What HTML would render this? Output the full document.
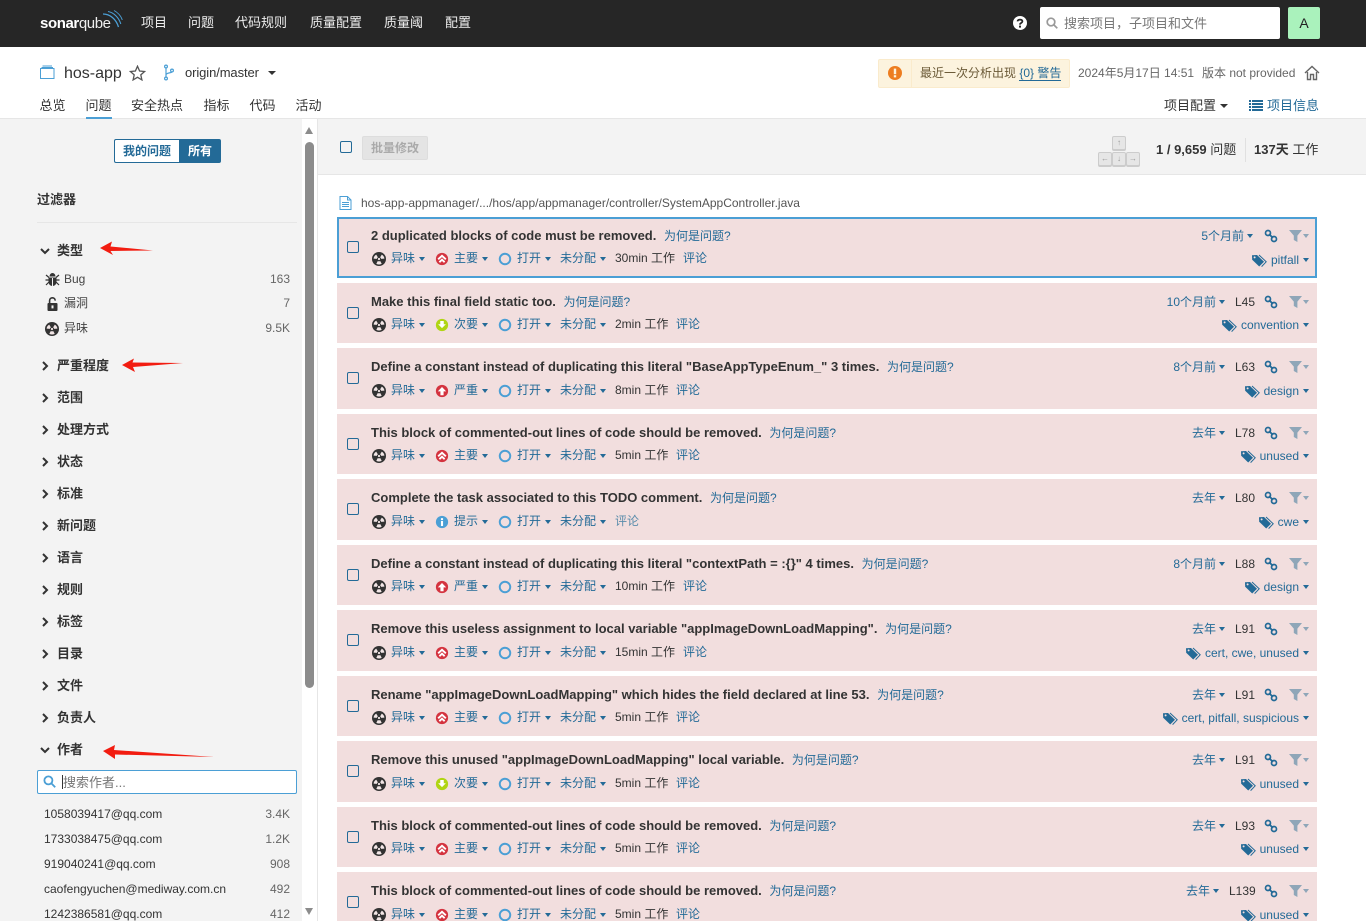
<!DOCTYPE html>
<html lang="zh">
<head>
<meta charset="utf-8">
<title>hos-app</title>
<style>
html,body{margin:0;padding:0;width:1366px;height:921px;overflow:hidden;background:#fff}
body{position:relative;font:12px/16px "Liberation Sans","Noto Sans CJK SC",sans-serif;color:#333}
.a{position:absolute;white-space:nowrap}
.lk{color:#236a97}
.nav{color:#eee;font-size:13px;top:15px;line-height:16px}
.tab{font-size:13px;top:98px;color:#333}
.facet{left:57px;font-size:13px;font-weight:bold;color:#333;line-height:16px;margin-top:1px}
.chev{left:40px;width:10px;height:10px}
.row{position:absolute;left:337px;width:980px;height:60px;background:#f2dede}
.sel{box-sizing:border-box;left:337px;width:980px;height:61px;border:2px solid #4b9fd5;background:#f2dede}
.t{position:absolute;left:34px;top:11px;font-size:13px;font-weight:bold;color:#333;white-space:nowrap;line-height:16px}
.t span{font-weight:normal;font-size:12px;color:#236a97;margin-left:4px}
.m{position:absolute;top:33px;line-height:16px;white-space:nowrap;color:#236a97}
.d{color:#333}
.cb{position:absolute;left:10px;top:24px;width:10px;height:10px;border:1px solid #236a97;border-radius:2px;background:transparent}
.ic{position:absolute;width:14px;height:14px;top:35px}
.tri{position:absolute;width:0;height:0;border-left:3.5px solid transparent;border-right:3.5px solid transparent;border-top:4px solid #236a97;top:40px}
.dt{position:absolute;right:101px;top:11px;color:#236a97;white-space:nowrap;line-height:16px}
.tg{position:absolute;right:18px;top:34px;color:#236a97;white-space:nowrap;line-height:16px}
.tg svg{width:15px;height:13px;vertical-align:-3px;margin-right:4px}
.key{position:absolute;width:12px;height:12px;border:1px solid #ccc;border-radius:2px;background:#e6e6e6;color:#999;font-size:8px;line-height:12px;text-align:center;box-shadow:0 1px 0 #ccc}
.n{right:1076px;color:#666;text-align:right}
</style>
</head>
<body>
<svg width="0" height="0" style="position:absolute">
<defs>
<symbol id="smell" viewBox="0 0 14 14"><circle cx="7" cy="7" r="7" fill="#333"/><path d="M1.6 6.6A5.4 5.4 0 0 1 4.2 2.6L5.900 5.400A2.3 2.3 0 0 0 4.800 6.900ZM12.400 6.600A5.4 5.4 0 0 0 9.800 2.600L8.100 5.400A2.3 2.3 0 0 1 9.200 6.900ZM4.300 11.700A5.4 5.4 0 0 0 9.700 11.700L8.200 9A2.3 2.3 0 0 1 5.800 9Z" fill="#f2e6e6"/><circle cx="7" cy="7" r="1.1" fill="#f2e6e6"/></symbol>
<symbol id="major" viewBox="-1 -1 16 16"><circle cx="7" cy="7" r="7" fill="#d4333f"/><path d="M2.600 7.400 7 3.400l4.400 4M4 10.600 7 7.800l3 2.800" fill="none" stroke="#fff" stroke-width="2.200"/></symbol>
<symbol id="crit" viewBox="-1 -1 16 16"><circle cx="7" cy="7" r="7" fill="#d4333f"/><path d="M7 2.400 11.800 7.400H8.800v4.400H5.200V7.400H2.200Z" fill="#fff"/></symbol>
<symbol id="minor" viewBox="-1 -1 16 16"><circle cx="7" cy="7" r="7" fill="#b0d513"/><path d="M5 2.400h4V6.200h2.400L7 10.600 2.600 6.200H5Z" fill="#fff"/></symbol>
<symbol id="info" viewBox="-1 -1 16 16"><circle cx="7" cy="7" r="7" fill="#4b9fd5"/><rect x="5.800" y="2.600" width="2.400" height="2.200" fill="#fff"/><rect x="5.800" y="5.800" width="2.400" height="5.800" fill="#fff"/></symbol>
<symbol id="open" viewBox="-1 -1 16 16"><circle cx="7" cy="7" r="6" fill="none" stroke="#4b9fd5" stroke-width="2.200"/></symbol>
<symbol id="link" viewBox="0 0 14 14"><g fill="none" stroke="#236a97" stroke-width="1.700"><circle cx="4" cy="4" r="2.500"/><circle cx="10" cy="10" r="2.500"/><path d="M5 5l4 4"/></g></symbol>
<symbol id="filter" viewBox="0 0 14 14"><path d="M0 1h13L8.400 6.600V13L4.800 11V6.600Z" fill="#8fa6b8"/></symbol>
<symbol id="tag" viewBox="0 0 15 13"><path d="M0 1.200 5 1l7 6.800-4.800 4.700L.2 5.800Z" fill="#236a97"/><path d="M7 1l7.200 6.800L9.600 12.600" fill="none" stroke="#236a97" stroke-width="1"/><circle cx="2.600" cy="3.400" r="1" fill="#f2dede"/></symbol>
</defs>
</svg>

<!-- top bar -->
<div class="a" style="left:0;top:0;width:1366px;height:47px;background:#262626"></div>
<div class="a" style="left:40px;top:15px;font-size:15px;line-height:18px;color:#fff;letter-spacing:-.4px"><b>sonar</b><span style="font-weight:normal;color:#eee">qube</span></div>
<svg class="a" style="left:102px;top:9px" width="22" height="20" viewBox="0 0 22 20" fill="none" stroke="#4b9fd5"><path d="M1 5C8 5 14 10 16.500 18" stroke-width="1.300"/><path d="M6 2.500C12 3.500 17 9 18.800 15" stroke-width="1.100"/><path d="M12 1.500C15 3 19 6.500 20.300 11" stroke-width=".9"/></svg>
<div class="a nav" style="left:141px">项目</div>
<div class="a nav" style="left:188px">问题</div>
<div class="a nav" style="left:235px">代码规则</div>
<div class="a nav" style="left:310px">质量配置</div>
<div class="a nav" style="left:384px">质量阈</div>
<div class="a nav" style="left:445px">配置</div>
<svg class="a" style="left:1013px;top:16px" width="14" height="14" viewBox="0 0 14 14"><circle cx="7" cy="7" r="7" fill="#fff"/><path d="M4.600 5.400C4.600 3 9.400 3 9.400 5.400 9.400 7 7 6.800 7 8.600" fill="none" stroke="#262626" stroke-width="1.800"/><rect x="6" y="9.600" width="2" height="2" fill="#262626"/></svg>
<div class="a" style="left:1040px;top:7px;width:240px;height:32px;background:#fff;border-radius:2px"></div>
<svg class="a" style="left:1046px;top:17px" width="12" height="12" viewBox="0 0 12 12" fill="none" stroke="#999" stroke-width="1.700"><circle cx="5" cy="5" r="3.800"/><path d="M8 8l3.300 3.300"/></svg>
<div class="a" style="left:1064px;top:16px;font-size:13px;color:#777">搜索项目，子项目和文件</div>
<div class="a" style="left:1288px;top:7px;width:32px;height:32px;background:#aaf2bc;border-radius:2px;text-align:center;line-height:32px;font-size:14px;color:#222">A</div>

<!-- project header -->
<svg class="a" style="left:40px;top:65px" width="15" height="15" viewBox="0 0 15 15" fill="none" stroke="#4b9fd5" stroke-width="1"><rect x=".5" y="3.500" width="13.500" height="10"/><path d="M1.500 2.500h11.500M2.500 1h9.500"/></svg>
<div class="a" style="left:64px;top:64px;font-size:16px;line-height:20px;color:#333">hos-app</div>
<svg class="a" style="left:129px;top:65px" width="17" height="16" viewBox="0 0 17 16"><path d="M8.500 1.200 10.600 6l5 .5-3.800 3.400 1.100 5-4.400-2.600-4.400 2.600 1.100-5L1.400 6.500l5-.5Z" fill="none" stroke="#555" stroke-width="1.300"/></svg>
<svg class="a" style="left:163px;top:64px" width="12" height="17" viewBox="0 0 12 17" fill="none" stroke="#4b9fd5" stroke-width="1.200"><circle cx="3" cy="2.500" r="1.400"/><circle cx="3" cy="14.500" r="1.400"/><circle cx="9" cy="6.500" r="1.400"/><path d="M3 4v9M3 11C3 8.500 8.500 9 9 8"/></svg>
<div class="a" style="left:185px;top:65px;font-size:13px;letter-spacing:-.1px;color:#333">origin/master</div>
<div class="a" style="left:268px;top:71px;border-left:4px solid transparent;border-right:4px solid transparent;border-top:4px solid #333;width:0;height:0"></div>

<div class="a" style="left:878px;top:59px;width:192px;height:29px;box-sizing:border-box;background:#fcf3de;border:1px solid #faebcc;border-radius:2px"></div>
<div class="a" style="left:911px;top:60px;width:1px;height:27px;background:#faebcc"></div>
<svg class="a" style="left:888px;top:66px" width="14" height="14" viewBox="0 0 14 14"><circle cx="7" cy="7" r="7" fill="#ed7d20"/><rect x="5.800" y="2.600" width="2.400" height="5.600" fill="#fcf3de"/><rect x="5.800" y="9.200" width="2.400" height="2.200" fill="#fcf3de"/></svg>
<div class="a" style="left:920px;top:65px;color:#6b5a37">最近一次分析出现 <span style="color:#236a97;border-bottom:1px solid #236a97">{0} 警告</span></div>
<div class="a" style="left:1078px;top:65px;color:#666">2024年5月17日 14:51</div>
<div class="a" style="left:1202px;top:65px;color:#666">版本 not provided</div>
<svg class="a" style="left:1304px;top:65px" width="16" height="16" viewBox="0 0 16 16" fill="none" stroke="#666" stroke-width="1.400"><path d="M1 8l7-6.500L15 8M3.500 7v7.500h3v-5h3v5h3V7"/></svg>

<div class="a tab" style="left:39.500px">总览</div>
<div class="a tab" style="left:85.500px">问题</div>
<div class="a tab" style="left:131px">安全热点</div>
<div class="a tab" style="left:203.500px">指标</div>
<div class="a tab" style="left:249.500px">代码</div>
<div class="a tab" style="left:295.500px">活动</div>
<div class="a tab" style="left:1164px">项目配置</div>
<div class="a" style="left:1220px;top:104px;border-left:4px solid transparent;border-right:4px solid transparent;border-top:4px solid #333;width:0;height:0"></div>
<svg class="a" style="left:1249px;top:100px" width="14" height="11" viewBox="0 0 14 11" fill="#236a97"><path d="M0 0h2v2H0zM3 0h11v2H3zM0 3h2v2H0zM3 3h11v2H3zM0 6h2v2H0zM3 6h11v2H3zM0 9h2v2H0zM3 9h11v2H3z"/></svg>
<div class="a tab lk" style="left:1267px;color:#236a97">项目信息</div>
<div class="a" style="left:0;top:118px;width:1366px;height:1px;background:#e6e6e6"></div>
<div class="a" style="left:86px;top:117px;width:26px;height:3px;background:#4b9fd5"></div>

<!-- sidebar -->
<div class="a" style="left:0;top:119px;width:302px;height:802px;background:#f3f3f3"></div>
<div class="a" style="left:317px;top:119px;width:1px;height:802px;background:#e6e6e6"></div>
<div class="a" style="left:305px;top:142px;width:9px;height:546px;background:#8c8c8c;border-radius:5px"></div>
<div class="a" style="left:305px;top:127px;border-left:4.500px solid transparent;border-right:4.500px solid transparent;border-bottom:7px solid #8c8c8c;width:0;height:0"></div>
<div class="a" style="left:305px;top:908px;border-left:4.500px solid transparent;border-right:4.500px solid transparent;border-top:7px solid #8c8c8c;width:0;height:0"></div>

<div class="a" style="left:114px;top:139px;width:65px;height:24px;box-sizing:border-box;border:1px solid #236a97;border-right:0;border-radius:2px 0 0 2px;background:#fff;color:#236a97;font-weight:bold;text-align:center;line-height:22px">我的问题</div>
<div class="a" style="left:179px;top:139px;width:42px;height:24px;background:#236a97;border-radius:0 2px 2px 0;color:#fff;font-weight:bold;text-align:center;line-height:24px">所有</div>
<div class="a" style="left:37px;top:192px;font-size:13px;font-weight:bold;color:#333">过滤器</div>
<div class="a" style="left:37px;top:222px;width:260px;height:1px;background:#e6e6e6"></div>

<svg class="a chev" style="top:246px" viewBox="0 0 10 10"><path d="M1 3l4 4 4-4" fill="none" stroke="#333" stroke-width="2"/></svg>
<div class="a facet" style="top:242px">类型</div>
<svg class="a" style="left:45px;top:272px" width="15" height="14" viewBox="0 0 15 14"><path d="M4.500 4.500a3 3.500 0 0 1 6 0ZM3.500 5.500h8V10a4 4 0 0 1-8 0Z" fill="#333"/><path d="M1 3l3 2.500M14 3l-3 2.500M.5 8h3M14.500 8h-3M1 13l3-3M14 13l-3-3" stroke="#333" stroke-width="1.200"/><path d="M7.500 6v8" stroke="#f3f3f3"/></svg>
<div class="a" style="left:64px;top:271px;color:#444">Bug</div>
<div class="a n" style="top:271px">163</div>
<svg class="a" style="left:47px;top:297px" width="11" height="14" viewBox="0 0 11 14"><rect x=".5" y="6" width="10" height="8" rx="1" fill="#333"/><path d="M2.600 6V3.600a2.800 2.800 0 0 1 5.600 0" fill="none" stroke="#333" stroke-width="1.600"/><rect x="4.500" y="8.400" width="2" height="3" fill="#f3f3f3"/></svg>
<div class="a" style="left:64px;top:295px;color:#444">漏洞</div>
<div class="a n" style="top:295px">7</div>
<svg class="a" style="left:45px;top:322px" width="14" height="14"><use href="#smell"/></svg>
<div class="a" style="left:64px;top:320px;color:#444">异味</div>
<div class="a n" style="top:320px">9.5K</div>

<svg class="a chev" style="top:361px" viewBox="0 0 10 10"><path d="M3 1l4 4-4 4" fill="none" stroke="#333" stroke-width="2"/></svg>
<div class="a facet" style="top:357px">严重程度</div>
<svg class="a chev" style="top:393px" viewBox="0 0 10 10"><path d="M3 1l4 4-4 4" fill="none" stroke="#333" stroke-width="2"/></svg>
<div class="a facet" style="top:389px">范围</div>
<svg class="a chev" style="top:425px" viewBox="0 0 10 10"><path d="M3 1l4 4-4 4" fill="none" stroke="#333" stroke-width="2"/></svg>
<div class="a facet" style="top:421px">处理方式</div>
<svg class="a chev" style="top:457px" viewBox="0 0 10 10"><path d="M3 1l4 4-4 4" fill="none" stroke="#333" stroke-width="2"/></svg>
<div class="a facet" style="top:453px">状态</div>
<svg class="a chev" style="top:489px" viewBox="0 0 10 10"><path d="M3 1l4 4-4 4" fill="none" stroke="#333" stroke-width="2"/></svg>
<div class="a facet" style="top:485px">标准</div>
<svg class="a chev" style="top:521px" viewBox="0 0 10 10"><path d="M3 1l4 4-4 4" fill="none" stroke="#333" stroke-width="2"/></svg>
<div class="a facet" style="top:517px">新问题</div>
<svg class="a chev" style="top:553px" viewBox="0 0 10 10"><path d="M3 1l4 4-4 4" fill="none" stroke="#333" stroke-width="2"/></svg>
<div class="a facet" style="top:549px">语言</div>
<svg class="a chev" style="top:585px" viewBox="0 0 10 10"><path d="M3 1l4 4-4 4" fill="none" stroke="#333" stroke-width="2"/></svg>
<div class="a facet" style="top:581px">规则</div>
<svg class="a chev" style="top:617px" viewBox="0 0 10 10"><path d="M3 1l4 4-4 4" fill="none" stroke="#333" stroke-width="2"/></svg>
<div class="a facet" style="top:613px">标签</div>
<svg class="a chev" style="top:649px" viewBox="0 0 10 10"><path d="M3 1l4 4-4 4" fill="none" stroke="#333" stroke-width="2"/></svg>
<div class="a facet" style="top:645px">目录</div>
<svg class="a chev" style="top:681px" viewBox="0 0 10 10"><path d="M3 1l4 4-4 4" fill="none" stroke="#333" stroke-width="2"/></svg>
<div class="a facet" style="top:677px">文件</div>
<svg class="a chev" style="top:713px" viewBox="0 0 10 10"><path d="M3 1l4 4-4 4" fill="none" stroke="#333" stroke-width="2"/></svg>
<div class="a facet" style="top:709px">负责人</div>
<svg class="a chev" style="top:745px" viewBox="0 0 10 10"><path d="M1 3l4 4 4-4" fill="none" stroke="#333" stroke-width="2"/></svg>
<div class="a facet" style="top:741px">作者</div>

<div class="a" style="left:37px;top:770px;width:260px;height:24px;box-sizing:border-box;background:#fff;border:1px solid #4b9fd5;border-radius:2px"></div>
<svg class="a" style="left:43px;top:775px" width="13" height="13" viewBox="0 0 13 13" fill="none" stroke="#4b9fd5" stroke-width="1.800"><circle cx="5.400" cy="5.400" r="4"/><path d="M8.400 8.400l3.800 3.800"/></svg>
<div class="a" style="left:62px;top:775px;width:1px;height:14px;background:#333"></div>
<div class="a" style="left:63px;top:775px;font-size:13px;color:#777">搜索作者...</div>
<div class="a" style="left:44px;top:806px;color:#333">1058039417@qq.com</div><div class="a n" style="top:806px">3.4K</div>
<div class="a" style="left:44px;top:831px;color:#333">1733038475@qq.com</div><div class="a n" style="top:831px">1.2K</div>
<div class="a" style="left:44px;top:856px;color:#333">919040241@qq.com</div><div class="a n" style="top:856px">908</div>
<div class="a" style="left:44px;top:881px;color:#333">caofengyuchen@mediway.com.cn</div><div class="a n" style="top:881px">492</div>
<div class="a" style="left:44px;top:906px;color:#333">1242386581@qq.com</div><div class="a n" style="top:906px">412</div>

<!-- red arrows -->
<svg class="a" style="left:0;top:230px" width="300" height="540" viewBox="0 230 300 540">
<path d="M100 248 112 241.500 110.500 246.500 153 250.500 110.500 251 113 255Z" fill="#f21c10"/>
<path d="M122 365 134 358.500 132.500 362.500 183 363 133 367 135 372Z" fill="#f21c10"/>
<path d="M103 751 115 745 114 750 214 757 115 754.500 115 759Z" fill="#f21c10"/>
</svg>

<!-- toolbar -->
<div class="a" style="left:318px;top:119px;width:1048px;height:55px;background:#f3f3f3;border-bottom:1px solid #e6e6e6"></div>
<div class="a" style="left:340px;top:141px;width:10px;height:10px;border:1px solid #236a97;border-radius:2px"></div>
<div class="a" style="left:362px;top:136px;width:66px;height:24px;box-sizing:border-box;background:#e4e4e4;border:1px solid #ddd;border-radius:2px;text-align:center;line-height:22px;color:#aaa;font-weight:bold">批量修改</div>
<div class="key" style="left:1112px;top:136px">↑</div>
<div class="key" style="left:1098px;top:152px">←</div>
<div class="key" style="left:1112px;top:152px">↓</div>
<div class="key" style="left:1126px;top:152px">→</div>
<div class="a" style="left:1156px;top:141px;font-size:13px;line-height:18px;color:#333"><b>1 / 9,659</b> 问题</div>
<div class="a" style="left:1245px;top:138px;width:1px;height:24px;background:#e0e0e0"></div>
<div class="a" style="left:1254px;top:141px;font-size:13px;line-height:18px;color:#333"><b>137天</b> 工作</div>

<svg class="a" style="left:339px;top:196px" width="13" height="14" viewBox="0 0 13 14" fill="none" stroke="#4b9fd5"><path d="M1 .5h7.500l3.500 3.500v9.500H1ZM8.500 .5V4H12M3 6.500h7M3 8.500h7M3 10.500h7"/></svg>
<div class="a" style="left:361px;top:195px;color:#555">hos-app-appmanager/.../hos/app/appmanager/controller/SystemAppController.java</div>

<!-- row 1 -->
<div class="a sel" style="top:217px"></div>
<div class="row" style="top:217px;background:transparent">
<div class="t">2 duplicated blocks of code must be removed. <span>为何是问题?</span></div>
<div class="cb"></div>
<svg class="ic" style="left:35px"><use href="#smell"/></svg><div class="m" style="left:54px">异味</div><div class="tri" style="left:82px"></div>
<svg class="ic" style="left:98px"><use href="#major"/></svg><div class="m" style="left:117px">主要</div><div class="tri" style="left:145px"></div>
<svg class="ic" style="left:161px"><use href="#open"/></svg><div class="m" style="left:180px">打开</div><div class="tri" style="left:208px"></div>
<div class="m" style="left:223px">未分配</div><div class="tri" style="left:263px"></div>
<div class="m d" style="left:278px">30min 工作</div><div class="m" style="left:346px">评论</div>
<div class="a lk" style="right:73px;top:11px">5个月前</div><div class="tri" style="left:910px;top:17px"></div>
<svg class="ic" style="left:927px;top:12px"><use href="#link"/></svg>
<svg class="ic" style="left:952px;top:12px"><use href="#filter"/></svg><div class="tri" style="left:966px;top:17px;border-top-color:#8fa6b8"></div>
<div class="tg" style="top:35px"><svg><use href="#tag"/></svg>pitfall</div><div class="tri" style="left:966px;top:41px"></div>
</div>

<!-- row 2 -->
<div class="row" style="top:283px">
<div class="t">Make this final field static too. <span>为何是问题?</span></div><div class="cb"></div>
<svg class="ic" style="left:35px"><use href="#smell"/></svg><div class="m" style="left:54px">异味</div><div class="tri" style="left:82px"></div>
<svg class="ic" style="left:98px"><use href="#minor"/></svg><div class="m" style="left:117px">次要</div><div class="tri" style="left:145px"></div>
<svg class="ic" style="left:161px"><use href="#open"/></svg><div class="m" style="left:180px">打开</div><div class="tri" style="left:208px"></div>
<div class="m" style="left:223px">未分配</div><div class="tri" style="left:263px"></div>
<div class="m d" style="left:278px">2min 工作</div><div class="m" style="left:339px">评论</div>
<div class="dt">10个月前</div><div class="tri" style="left:882px;top:17px"></div><div class="a d" style="left:898px;top:11px">L45</div>
<svg class="ic" style="left:927px;top:12px"><use href="#link"/></svg>
<svg class="ic" style="left:952px;top:12px"><use href="#filter"/></svg><div class="tri" style="left:966px;top:17px;border-top-color:#8fa6b8"></div>
<div class="tg"><svg><use href="#tag"/></svg>convention</div><div class="tri" style="left:966px;top:40px"></div>
</div>

<!-- row 3 -->
<div class="row" style="top:348px;height:61px">
<div class="t">Define a constant instead of duplicating this literal "BaseAppTypeEnum_" 3 times. <span>为何是问题?</span></div><div class="cb"></div>
<svg class="ic" style="left:35px;top:36px"><use href="#smell"/></svg><div class="m" style="left:54px;top:34px">异味</div><div class="tri" style="left:82px;top:41px"></div>
<svg class="ic" style="left:98px;top:36px"><use href="#crit"/></svg><div class="m" style="left:117px;top:34px">严重</div><div class="tri" style="left:145px;top:41px"></div>
<svg class="ic" style="left:161px;top:36px"><use href="#open"/></svg><div class="m" style="left:180px;top:34px">打开</div><div class="tri" style="left:208px;top:41px"></div>
<div class="m" style="left:223px;top:34px">未分配</div><div class="tri" style="left:263px;top:41px"></div>
<div class="m d" style="left:278px;top:34px">8min 工作</div><div class="m" style="left:339px;top:34px">评论</div>
<div class="dt">8个月前</div><div class="tri" style="left:882px;top:17px"></div><div class="a d" style="left:898px;top:11px">L63</div>
<svg class="ic" style="left:927px;top:12px"><use href="#link"/></svg>
<svg class="ic" style="left:952px;top:12px"><use href="#filter"/></svg><div class="tri" style="left:966px;top:17px;border-top-color:#8fa6b8"></div>
<div class="tg" style="top:35px"><svg><use href="#tag"/></svg>design</div><div class="tri" style="left:966px;top:41px"></div>
</div>

<!-- row 4 -->
<div class="row" style="top:414px">
<div class="t">This block of commented-out lines of code should be removed. <span>为何是问题?</span></div><div class="cb"></div>
<svg class="ic" style="left:35px"><use href="#smell"/></svg><div class="m" style="left:54px">异味</div><div class="tri" style="left:82px"></div>
<svg class="ic" style="left:98px"><use href="#major"/></svg><div class="m" style="left:117px">主要</div><div class="tri" style="left:145px"></div>
<svg class="ic" style="left:161px"><use href="#open"/></svg><div class="m" style="left:180px">打开</div><div class="tri" style="left:208px"></div>
<div class="m" style="left:223px">未分配</div><div class="tri" style="left:263px"></div>
<div class="m d" style="left:278px">5min 工作</div><div class="m" style="left:339px">评论</div>
<div class="dt">去年</div><div class="tri" style="left:882px;top:17px"></div><div class="a d" style="left:898px;top:11px">L78</div>
<svg class="ic" style="left:927px;top:12px"><use href="#link"/></svg>
<svg class="ic" style="left:952px;top:12px"><use href="#filter"/></svg><div class="tri" style="left:966px;top:17px;border-top-color:#8fa6b8"></div>
<div class="tg"><svg><use href="#tag"/></svg>unused</div><div class="tri" style="left:966px;top:40px"></div>
</div>

<!-- row 5 -->
<div class="row" style="top:479px;height:61px">
<div class="t">Complete the task associated to this TODO comment. <span>为何是问题?</span></div><div class="cb"></div>
<svg class="ic" style="left:35px;top:36px"><use href="#smell"/></svg><div class="m" style="left:54px;top:34px">异味</div><div class="tri" style="left:82px;top:41px"></div>
<svg class="ic" style="left:98px;top:36px"><use href="#info"/></svg><div class="m" style="left:117px;top:34px">提示</div><div class="tri" style="left:145px;top:41px"></div>
<svg class="ic" style="left:161px;top:36px"><use href="#open"/></svg><div class="m" style="left:180px;top:34px">打开</div><div class="tri" style="left:208px;top:41px"></div>
<div class="m" style="left:223px;top:34px">未分配</div><div class="tri" style="left:263px;top:41px"></div>
<div class="m" style="left:278px;top:34px;color:#5a8cab">评论</div>
<div class="dt">去年</div><div class="tri" style="left:882px;top:17px"></div><div class="a d" style="left:898px;top:11px">L80</div>
<svg class="ic" style="left:927px;top:12px"><use href="#link"/></svg>
<svg class="ic" style="left:952px;top:12px"><use href="#filter"/></svg><div class="tri" style="left:966px;top:17px;border-top-color:#8fa6b8"></div>
<div class="tg" style="top:35px"><svg><use href="#tag"/></svg>cwe</div><div class="tri" style="left:966px;top:41px"></div>
</div>

<!-- row 6 -->
<div class="row" style="top:545px">
<div class="t">Define a constant instead of duplicating this literal "contextPath = :{}" 4 times. <span>为何是问题?</span></div><div class="cb"></div>
<svg class="ic" style="left:35px"><use href="#smell"/></svg><div class="m" style="left:54px">异味</div><div class="tri" style="left:82px"></div>
<svg class="ic" style="left:98px"><use href="#crit"/></svg><div class="m" style="left:117px">严重</div><div class="tri" style="left:145px"></div>
<svg class="ic" style="left:161px"><use href="#open"/></svg><div class="m" style="left:180px">打开</div><div class="tri" style="left:208px"></div>
<div class="m" style="left:223px">未分配</div><div class="tri" style="left:263px"></div>
<div class="m d" style="left:278px">10min 工作</div><div class="m" style="left:346px">评论</div>
<div class="dt">8个月前</div><div class="tri" style="left:882px;top:17px"></div><div class="a d" style="left:898px;top:11px">L88</div>
<svg class="ic" style="left:927px;top:12px"><use href="#link"/></svg>
<svg class="ic" style="left:952px;top:12px"><use href="#filter"/></svg><div class="tri" style="left:966px;top:17px;border-top-color:#8fa6b8"></div>
<div class="tg"><svg><use href="#tag"/></svg>design</div><div class="tri" style="left:966px;top:40px"></div>
</div>

<!-- row 7 -->
<div class="row" style="top:610px;height:61px">
<div class="t">Remove this useless assignment to local variable "appImageDownLoadMapping". <span>为何是问题?</span></div><div class="cb"></div>
<svg class="ic" style="left:35px;top:36px"><use href="#smell"/></svg><div class="m" style="left:54px;top:34px">异味</div><div class="tri" style="left:82px;top:41px"></div>
<svg class="ic" style="left:98px;top:36px"><use href="#major"/></svg><div class="m" style="left:117px;top:34px">主要</div><div class="tri" style="left:145px;top:41px"></div>
<svg class="ic" style="left:161px;top:36px"><use href="#open"/></svg><div class="m" style="left:180px;top:34px">打开</div><div class="tri" style="left:208px;top:41px"></div>
<div class="m" style="left:223px;top:34px">未分配</div><div class="tri" style="left:263px;top:41px"></div>
<div class="m d" style="left:278px;top:34px">15min 工作</div><div class="m" style="left:346px;top:34px">评论</div>
<div class="dt">去年</div><div class="tri" style="left:882px;top:17px"></div><div class="a d" style="left:898px;top:11px">L91</div>
<svg class="ic" style="left:927px;top:12px"><use href="#link"/></svg>
<svg class="ic" style="left:952px;top:12px"><use href="#filter"/></svg><div class="tri" style="left:966px;top:17px;border-top-color:#8fa6b8"></div>
<div class="tg" style="top:35px"><svg><use href="#tag"/></svg>cert, cwe, unused</div><div class="tri" style="left:966px;top:41px"></div>
</div>

<!-- row 8 -->
<div class="row" style="top:676px">
<div class="t">Rename "appImageDownLoadMapping" which hides the field declared at line 53. <span>为何是问题?</span></div><div class="cb"></div>
<svg class="ic" style="left:35px"><use href="#smell"/></svg><div class="m" style="left:54px">异味</div><div class="tri" style="left:82px"></div>
<svg class="ic" style="left:98px"><use href="#major"/></svg><div class="m" style="left:117px">主要</div><div class="tri" style="left:145px"></div>
<svg class="ic" style="left:161px"><use href="#open"/></svg><div class="m" style="left:180px">打开</div><div class="tri" style="left:208px"></div>
<div class="m" style="left:223px">未分配</div><div class="tri" style="left:263px"></div>
<div class="m d" style="left:278px">5min 工作</div><div class="m" style="left:339px">评论</div>
<div class="dt">去年</div><div class="tri" style="left:882px;top:17px"></div><div class="a d" style="left:898px;top:11px">L91</div>
<svg class="ic" style="left:927px;top:12px"><use href="#link"/></svg>
<svg class="ic" style="left:952px;top:12px"><use href="#filter"/></svg><div class="tri" style="left:966px;top:17px;border-top-color:#8fa6b8"></div>
<div class="tg"><svg><use href="#tag"/></svg>cert, pitfall, suspicious</div><div class="tri" style="left:966px;top:40px"></div>
</div>

<!-- row 9 -->
<div class="row" style="top:741px;height:61px">
<div class="t">Remove this unused "appImageDownLoadMapping" local variable. <span>为何是问题?</span></div><div class="cb"></div>
<svg class="ic" style="left:35px;top:36px"><use href="#smell"/></svg><div class="m" style="left:54px;top:34px">异味</div><div class="tri" style="left:82px;top:41px"></div>
<svg class="ic" style="left:98px;top:36px"><use href="#minor"/></svg><div class="m" style="left:117px;top:34px">次要</div><div class="tri" style="left:145px;top:41px"></div>
<svg class="ic" style="left:161px;top:36px"><use href="#open"/></svg><div class="m" style="left:180px;top:34px">打开</div><div class="tri" style="left:208px;top:41px"></div>
<div class="m" style="left:223px;top:34px">未分配</div><div class="tri" style="left:263px;top:41px"></div>
<div class="m d" style="left:278px;top:34px">5min 工作</div><div class="m" style="left:339px;top:34px">评论</div>
<div class="dt">去年</div><div class="tri" style="left:882px;top:17px"></div><div class="a d" style="left:898px;top:11px">L91</div>
<svg class="ic" style="left:927px;top:12px"><use href="#link"/></svg>
<svg class="ic" style="left:952px;top:12px"><use href="#filter"/></svg><div class="tri" style="left:966px;top:17px;border-top-color:#8fa6b8"></div>
<div class="tg" style="top:35px"><svg><use href="#tag"/></svg>unused</div><div class="tri" style="left:966px;top:41px"></div>
</div>

<!-- row 10 -->
<div class="row" style="top:807px">
<div class="t">This block of commented-out lines of code should be removed. <span>为何是问题?</span></div><div class="cb"></div>
<svg class="ic" style="left:35px"><use href="#smell"/></svg><div class="m" style="left:54px">异味</div><div class="tri" style="left:82px"></div>
<svg class="ic" style="left:98px"><use href="#major"/></svg><div class="m" style="left:117px">主要</div><div class="tri" style="left:145px"></div>
<svg class="ic" style="left:161px"><use href="#open"/></svg><div class="m" style="left:180px">打开</div><div class="tri" style="left:208px"></div>
<div class="m" style="left:223px">未分配</div><div class="tri" style="left:263px"></div>
<div class="m d" style="left:278px">5min 工作</div><div class="m" style="left:339px">评论</div>
<div class="dt">去年</div><div class="tri" style="left:882px;top:17px"></div><div class="a d" style="left:898px;top:11px">L93</div>
<svg class="ic" style="left:927px;top:12px"><use href="#link"/></svg>
<svg class="ic" style="left:952px;top:12px"><use href="#filter"/></svg><div class="tri" style="left:966px;top:17px;border-top-color:#8fa6b8"></div>
<div class="tg"><svg><use href="#tag"/></svg>unused</div><div class="tri" style="left:966px;top:40px"></div>
</div>

<!-- row 11 -->
<div class="row" style="top:872px;height:49px">
<div class="t">This block of commented-out lines of code should be removed. <span>为何是问题?</span></div><div class="cb"></div>
<svg class="ic" style="left:35px;top:36px"><use href="#smell"/></svg><div class="m" style="left:54px;top:34px">异味</div><div class="tri" style="left:82px;top:41px"></div>
<svg class="ic" style="left:98px;top:36px"><use href="#major"/></svg><div class="m" style="left:117px;top:34px">主要</div><div class="tri" style="left:145px;top:41px"></div>
<svg class="ic" style="left:161px;top:36px"><use href="#open"/></svg><div class="m" style="left:180px;top:34px">打开</div><div class="tri" style="left:208px;top:41px"></div>
<div class="m" style="left:223px;top:34px">未分配</div><div class="tri" style="left:263px;top:41px"></div>
<div class="m d" style="left:278px;top:34px">5min 工作</div><div class="m" style="left:339px;top:34px">评论</div>
<div class="dt" style="right:107px">去年</div><div class="tri" style="left:876px;top:17px"></div><div class="a d" style="left:892px;top:11px">L139</div>
<svg class="ic" style="left:927px;top:12px"><use href="#link"/></svg>
<svg class="ic" style="left:952px;top:12px"><use href="#filter"/></svg><div class="tri" style="left:966px;top:17px;border-top-color:#8fa6b8"></div>
<div class="tg" style="top:35px"><svg><use href="#tag"/></svg>unused</div><div class="tri" style="left:966px;top:41px"></div>
</div>
</body>
</html>
